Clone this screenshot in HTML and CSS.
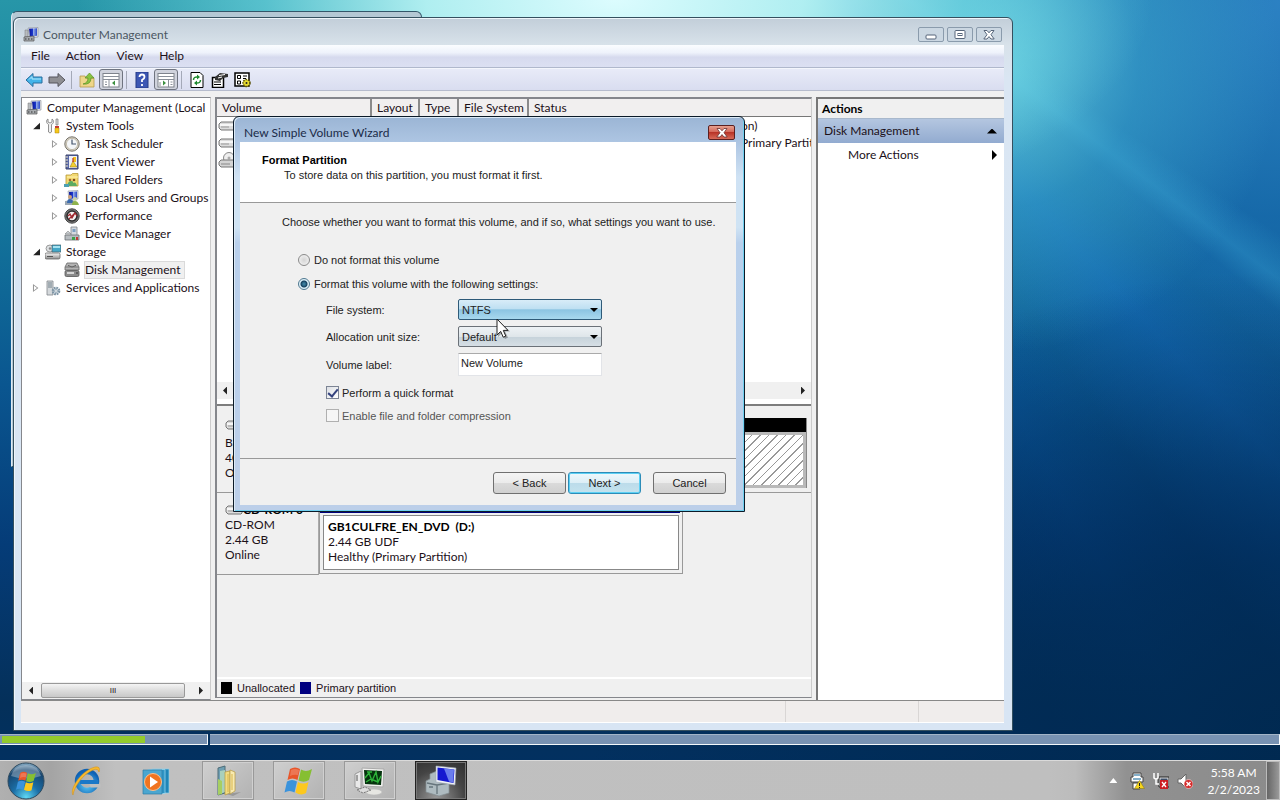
FILE: index.html
```html
<!DOCTYPE html>
<html lang="en">
<head>
<meta charset="utf-8">
<title>Computer Management</title>
<link rel="stylesheet" href="styles.css">
</head>
<body>
<svg class="defs" aria-hidden="true">
  <defs>
    <linearGradient id="g-screen" x1="0" y1="0" x2="1" y2="0"><stop offset="0" stop-color="#0a1496"/><stop offset=".5" stop-color="#1c3ad0"/><stop offset=".55" stop-color="#8fa8e8"/><stop offset="1" stop-color="#2a48c8"/></linearGradient>
    <radialGradient id="g-orb" cx=".5" cy=".95" r=".95"><stop offset="0" stop-color="#5fd8f4"/><stop offset=".4" stop-color="#1b6ea6"/><stop offset=".8" stop-color="#17456f"/><stop offset="1" stop-color="#8fb4cc"/></radialGradient>
    <radialGradient id="g-ie" cx=".5" cy=".7" r=".7"><stop offset="0" stop-color="#5fd0fa"/><stop offset="1" stop-color="#0f62b4"/></radialGradient>
    <linearGradient id="g-disk" x1="0" y1="0" x2="0" y2="1"><stop offset="0" stop-color="#fafafa"/><stop offset="1" stop-color="#8c8c8c"/></linearGradient>
    <symbol id="i-computer" viewBox="0 0 16 16"><path d="M5 1l10-.5V10l-8 1z" fill="#e4e6ea" stroke="#888c96" stroke-width=".6"/><path d="M6 1.800l8-.5v7.500l-7 1z" fill="url(#g-screen)"/><path d="M2 3h3v7H2z" fill="#b8bcc0" stroke="#777" stroke-width=".5"/><path d="M1 10l10-1v5H1z" fill="#a8acb0" stroke="#555" stroke-width=".7"/><path d="M2 12h1.500M5 12h1.500M8 12h1.500" stroke="#333"/></symbol>
    <symbol id="i-tools" viewBox="0 0 16 16"><path d="M3 1v3l2 1 2-1V1c3 2 1 5-.5 5.500V14q-1.500 2-3 0V6.500C1 5 1 2 3 1z" fill="#f0f0f0" stroke="#777" stroke-width=".8"/><path d="M11 1h2v6h-2z" fill="#ddd" stroke="#666" stroke-width=".6"/><path d="M10 8h4v2h-4z" fill="#c33"/><path d="M10 10h4v5h-4z" fill="#f5c71a" stroke="#a98210" stroke-width=".5"/></symbol>
    <symbol id="i-clock" viewBox="0 0 16 16"><circle cx="8" cy="8" r="7.200" fill="#d8d4c8" stroke="#77736a"/><circle cx="8" cy="8" r="5.600" fill="#f4f6f8" stroke="#b4ac98" stroke-width=".7"/><path d="M8 3.500V8h4" fill="none" stroke="#44546c" stroke-width="1.200"/></symbol>
    <symbol id="i-event" viewBox="0 0 16 16"><path d="M2 1h12v14H2z" fill="#5868a8" stroke="#39406a"/><path d="M5 2h8v12H5z" fill="#eef0f8"/><path d="M1 3h3M1 6h3M1 9h3M1 12h3" stroke="#bbb" stroke-width="1.300"/><path d="M9 3h3v5H9z" fill="#f0c020"/><path d="M6 13l3-6 4 6z" fill="#f4d030" stroke="#8a7010" stroke-width=".5"/><path d="M9 4v4" stroke="#c03020" stroke-width="1.200"/></symbol>
    <symbol id="i-folder" viewBox="0 0 16 16"><path d="M2 3h5l1.500-1.500H14V14H2z" fill="#f2d871" stroke="#b99a36" stroke-width=".8"/><path d="M3 5h11" stroke="#fff3b0"/><circle cx="6" cy="8" r="1.300" fill="#a5662e"/><circle cx="10" cy="8" r="1.300" fill="#7e4a1e"/><path d="M3 14q1-5 4-5t2 2q3-2 4 3z" fill="#5cab62"/><path d="M0 12h5v3H0z" fill="#4c9fb0"/></symbol>
    <symbol id="i-users" viewBox="0 0 16 16"><path d="M4 1l10-.5V9L5 10z" fill="#dde2ea" stroke="#8a90a0" stroke-width=".6"/><path d="M5 2l8-.5v6.500l-7.500 1z" fill="url(#g-screen)"/><path d="M1 11l8-1 3 3v2H1z" fill="#9aa6b2"/><circle cx="6" cy="7" r="2" fill="#caa27c"/><path d="M3 13q0-4 3-4t3 4z" fill="#3c6cae"/><circle cx="11" cy="9" r="2" fill="#c9d3a6"/><path d="M8 15q0-4 3-4t4 4z" fill="#8fb34c"/></symbol>
    <symbol id="i-perf" viewBox="0 0 16 16"><circle cx="8" cy="8" r="7.200" fill="#777" stroke="#444"/><circle cx="8" cy="8" r="5" fill="#f4f2f2" stroke="#2c2c2c" stroke-width="1.600"/><path d="M4 8l2-2 2 4 3-5 2 3M5 11l6-6" fill="none" stroke="#a12a30" stroke-width="1.300"/></symbol>
    <symbol id="i-device" viewBox="0 0 16 16"><path d="M7 1h6v9H7z" fill="#d5dae0" stroke="#80868c" stroke-width=".8"/><path d="M8.500 3h3v3h-3z" fill="#7d9fc0"/><path d="M1 9h14v5H1z" fill="#b7bcc0" stroke="#6b7074" stroke-width=".8"/><path d="M1 8l3-3 3 3z" fill="#c9ced2" stroke="#777" stroke-width=".5"/><path d="M8 11h3v3H8z" fill="#3da04a"/><path d="M12 11h2v3h-2z" fill="#c03a34"/></symbol>
    <symbol id="i-storage" viewBox="0 0 16 16"><rect x="0" y="9" width="15" height="6" rx="1.500" fill="url(#g-disk)" stroke="#666" stroke-width=".8"/><ellipse cx="5" cy="4.500" rx="4" ry="3.500" fill="#dde0e2" stroke="#888" stroke-width=".8"/><circle cx="5" cy="4.500" r="1.200" fill="#888"/><path d="M7 1h9v7H7z" fill="#44a8c8" stroke="#45606c" stroke-width=".7"/><path d="M8 2h7v2H8z" fill="#a6e2f0"/><path d="M2 12.500h6" stroke="#555"/></symbol>
    <symbol id="i-disk" viewBox="0 0 16 16"><path d="M3 1h10l2 4v3H1V5z" fill="#b4b4b4" stroke="#666" stroke-width=".8"/><path d="M4 3.500q4 3 8 0" fill="none" stroke="#555"/><rect x="1" y="8.500" width="14" height="6" rx="1.500" fill="#8a8a8a" stroke="#555" stroke-width=".8"/><path d="M3 11h7" stroke="#eee" stroke-width="1.500"/><path d="M12 11h2" stroke="#333"/><path d="M1 5h14" stroke="#777"/></symbol>
    <symbol id="i-services" viewBox="0 0 16 16"><path d="M2 1h6v14H2z" fill="#d5d9dc" stroke="#81878c" stroke-width=".8"/><path d="M3 3h4M3 5h4M3 7h4" stroke="#70808a"/><circle cx="11" cy="11" r="3.200" fill="#dfe8ee" stroke="#7d94a5" stroke-width="2.200" stroke-dasharray="1.700 .8"/><circle cx="11" cy="11" r="1.400" fill="#fff" stroke="#7d94a5" stroke-width=".8"/></symbol>
    <symbol id="i-drive" viewBox="0 0 18 10"><path d="M3 1h13l1 2v5l-1 1H3L1 7V3z" fill="#dcdcdc" stroke="#777"/><path d="M2 4h14" stroke="#fff" stroke-width="1.500"/><path d="M3 6h8" stroke="#999"/></symbol>
    <symbol id="i-cd" viewBox="0 0 18 16"><circle cx="11" cy="6" r="5.500" fill="#eee" stroke="#888"/><circle cx="11" cy="6" r="1.500" fill="#aaa"/><path d="M3 8h13l1 2v4l-1 1H3l-2-2v-3z" fill="#d4d4d4" stroke="#777"/><path d="M3 12h9" stroke="#888"/></symbol>
    <symbol id="i-flag" viewBox="0 0 32 32"><path d="M7 4q5-3 10 0l-2.500 11q-5-3-10 0z" fill="#e8562a"/><path d="M18 4.500q5 3 11-.5l-3 11q-5 3-10.500.5z" fill="#86bf32"/><path d="M4 16.500q5-3 10 0l-2.500 11q-5-3-10 0z" fill="#3a93dc"/><path d="M15 17q5 3 10.500 0l-2.500 11q-5 3-10.500-.500z" fill="#fcc81e"/><path d="M8 5q4-2 8 0l-1 5q-4-1-8 1z" fill="#fff" opacity=".2"/></symbol>
  </defs>
</svg>

<main class="desktop">
  <div class="back-window"></div>

  <section class="window" aria-label="Computer Management">
    <header class="titlebar">
      <svg class="ico"><use href="#i-computer"/></svg>
      <h1>Computer Management</h1>
      <div class="caption">
        <button aria-label="Minimize"><svg viewBox="0 0 16 12"><rect x="3" y="6" width="10" height="4" rx="1" fill="#fff" stroke="#56657a"/></svg></button>
        <button aria-label="Maximize"><svg viewBox="0 0 16 12"><rect x="3" y="1.500" width="10" height="8" rx="1" fill="#fff" stroke="#56657a"/><rect x="6" y="4.500" width="4" height="2" fill="#fff" stroke="#56657a"/></svg></button>
        <button aria-label="Close"><svg viewBox="0 0 16 12"><path d="M3 1.500h3l2 2.300 2-2.300h3L10 5.700l3.200 4.300H10L8 7.600 6 10H2.800L6 5.700z" fill="#fff" stroke="#56657a"/></svg></button>
      </div>
    </header>
    <nav class="menubar"><button>File</button><button>Action</button><button>View</button><button>Help</button></nav>
    <div class="toolbar">
      <button aria-label="Back"><svg viewBox="0 0 18 16"><path d="M1 8l7-6.500V5h9v6H8v3.500z" fill="#43b4ea" stroke="#2a6c9c"/><path d="M4 7.500l3-3V7h9" fill="none" stroke="#b5e7fb"/></svg></button>
      <button aria-label="Forward"><svg viewBox="0 0 18 16"><path d="M17 8l-7-6.500V5H1v6h9v3.500z" fill="#8f8f94" stroke="#55555c"/></svg></button>
      <i class="sep"></i>
      <button aria-label="Up"><svg viewBox="0 0 18 16"><path d="M2 4h5l1 2h8v9H2z" fill="#eed68a" stroke="#b59a4c" stroke-width=".8"/><path d="M5 12q5-1 5-6H7l4.500-5L16 6h-3q0 7-8 6z" fill="#88c442" stroke="#5b8f25" stroke-width=".7"/></svg></button>
      <button class="on" aria-label="Show tree"><svg viewBox="0 0 18 16"><rect x="1" y="1.500" width="16" height="13.500" fill="#fff" stroke="#7e838c"/><path d="M1 4.500h16M1 7.500h16M7 8v7" stroke="#8a909a"/><path d="M3 10h2M3 12.500h2" stroke="#8a909a"/><path d="M13 8.500v5L10 11z" fill="#3d9140"/></svg></button>
      <i class="sep"></i>
      <button aria-label="Help"><svg viewBox="0 0 18 16"><rect x="3" y="0" width="12" height="16" fill="#3c56b4" stroke="#243a86"/><path d="M6.500 5q0-2.500 2.500-2.500T11.500 5Q11.500 6.500 9 8v2M9 12v2" fill="none" stroke="#fff" stroke-width="1.800"/></svg></button>
      <button class="on" aria-label="Show actions"><svg viewBox="0 0 18 16"><rect x="1" y="1.500" width="16" height="13.500" fill="#fff" stroke="#7e838c"/><path d="M1 4.500h16M1 7.500h16M11.500 8v7" stroke="#8a909a"/><path d="M13.500 10h2M13.500 12.500h2M3 10v4" stroke="#8a909a"/><path d="M6 8.500v5L9 11z" fill="#3d9140"/></svg></button>
      <i class="sep"></i>
      <button aria-label="Refresh"><svg viewBox="0 0 18 16"><path d="M3 .5h9l3 3v12H3z" fill="#fff" stroke="#000"/><path d="M5.500 8q0-3.500 4.500-3M12.500 8q0 3.500-4.500 3" fill="none" stroke="#1f8a30" stroke-width="1.500"/><path d="M9 2.500L12 5 9 7.500zM9 8.500L6 11l3 2.500z" fill="#1f8a30"/></svg></button>
      <button aria-label="Properties"><svg viewBox="0 0 18 16"><path d="M1.500 5.500h11v10h-11z" fill="#fff" stroke="#000" stroke-width="1.500"/><path d="M3 10h7M3 12.500h7" stroke="#000" stroke-width="1.200"/><path d="M4 5l5-4 8 1v3l-5 1-3 3-5-1z" fill="#333"/><path d="M8 3.500l6-1M7 6l4-1" stroke="#fff"/></svg></button>
      <button aria-label="Settings"><svg viewBox="0 0 18 16"><rect x="1" y="1" width="14" height="13" fill="#fff" stroke="#000" stroke-width="1.500"/><path d="M3.500 3.500h3v3h-3zM9 4h4M9 6.500h3M3.500 9h3v3h-3z" fill="none" stroke="#000"/><circle cx="12.500" cy="11" r="3.500" fill="#e8dc32" stroke="#554c00" stroke-width="1.500" stroke-dasharray="1.500 1"/><circle cx="12.500" cy="11" r="1" fill="#222"/></svg></button>
    </div>

    <div class="panes">
      <nav class="tree">
        <ul>
          <li><svg class="ico"><use href="#i-computer"/></svg><span>Computer Management (Local</span></li>
          <li class="l1 open"><svg class="ico"><use href="#i-tools"/></svg><span>System Tools</span></li>
          <li class="l2 shut"><svg class="ico"><use href="#i-clock"/></svg><span>Task Scheduler</span></li>
          <li class="l2 shut"><svg class="ico"><use href="#i-event"/></svg><span>Event Viewer</span></li>
          <li class="l2 shut"><svg class="ico"><use href="#i-folder"/></svg><span>Shared Folders</span></li>
          <li class="l2 shut"><svg class="ico"><use href="#i-users"/></svg><span>Local Users and Groups</span></li>
          <li class="l2 shut"><svg class="ico"><use href="#i-perf"/></svg><span>Performance</span></li>
          <li class="l2"><svg class="ico"><use href="#i-device"/></svg><span>Device Manager</span></li>
          <li class="l1 open"><svg class="ico"><use href="#i-storage"/></svg><span>Storage</span></li>
          <li class="l2"><svg class="ico"><use href="#i-disk"/></svg><span class="picked">Disk Management</span></li>
          <li class="l1 shut"><svg class="ico"><use href="#i-services"/></svg><span>Services and Applications</span></li>
        </ul>
        <div class="scroll"><i class="al"></i><b>III</b><i class="ar"></i></div>
      </nav>

      <section class="center">
        <div class="volumes">
          <table>
            <colgroup><col class="c1"><col class="c2"><col class="c3"><col class="c4"><col></colgroup>
            <thead><tr><th>Volume</th><th>Layout</th><th>Type</th><th>File System</th><th>Status</th></tr></thead>
            <tbody>
              <tr><td><svg class="drv"><use href="#i-drive"/></svg></td><td></td><td></td><td></td><td class="frag">on)</td></tr>
              <tr><td><svg class="drv"><use href="#i-drive"/></svg></td><td></td><td></td><td></td><td class="frag">Primary Partit</td></tr>
              <tr><td><svg class="cd"><use href="#i-cd"/></svg></td><td></td><td></td><td></td><td></td></tr>
            </tbody>
          </table>
          <div class="scroll"><i class="al"></i><i class="ar"></i></div>
        </div>
        <div class="disks">
          <div class="disk">
            <div class="info"><svg class="drv"><use href="#i-drive"/></svg><p>Basic</p><p>40.00 GB</p><p>Online</p></div>
            <div class="part free"><div class="bar"></div><div class="hatch"></div></div>
          </div>
          <div class="disk cdrom">
            <div class="info"><h2><svg class="drv"><use href="#i-drive"/></svg>CD-ROM 0</h2><p>CD-ROM</p><p>2.44 GB</p><p>Online</p></div>
            <div class="part used"><div class="bar"></div><div class="box"><h2>GB1CULFRE_EN_DVD&nbsp; (D:)</h2><p>2.44 GB UDF</p><p>Healthy (Primary Partition)</p></div></div>
          </div>
        </div>
        <div class="legend"><i class="black"></i><span>Unallocated</span><i class="navy"></i><span>Primary partition</span></div>
      </section>

      <aside class="actions">
        <h2>Actions</h2>
        <button class="group">Disk Management<i class="up"></i></button>
        <button class="more">More Actions<i class="right"></i></button>
      </aside>
    </div>
    <footer class="status"><span></span><span></span><span></span></footer>
  </section>

  <form class="dialog" aria-label="New Simple Volume Wizard">
    <header class="dlg-title"><h1>New Simple Volume Wizard</h1>
      <button type="button" aria-label="Close"><svg viewBox="0 0 16 12"><path d="M3 1.500h3l2 2.300 2-2.300h3L10 5.700l3.200 4.300H10L8 7.600 6 10H2.800L6 5.700z" fill="#fff" stroke="#6a3030" stroke-width=".8"/></svg></button>
    </header>
    <div class="dlg-page">
      <div class="intro"><h2>Format Partition</h2><p>To store data on this partition, you must format it first.</p></div>
      <div class="fields">
        <p>Choose whether you want to format this volume, and if so, what settings you want to use.</p>
        <label class="opt"><input type="radio" name="mode">Do not format this volume</label>
        <label class="opt"><input type="radio" name="mode" checked>Format this volume with the following settings:</label>
        <div class="grid">
          <label for="fs">File system:</label><div class="drop hot"><select id="fs"><option>NTFS</option></select></div>
          <label for="au">Allocation unit size:</label><div class="drop"><select id="au"><option>Default</option></select></div>
          <label for="vl">Volume label:</label><input id="vl" type="text" value="New Volume">
        </div>
        <label class="opt check"><input type="checkbox" checked>Perform a quick format</label>
        <label class="opt check off"><input type="checkbox" disabled>Enable file and folder compression</label>
      </div>
      <footer class="buttons"><button type="button">&lt; Back</button><button type="button" class="default">Next &gt;</button><button type="button" class="cancel">Cancel</button></footer>
    </div>
  </form>

  <svg class="cursor" viewBox="0 0 14 22"><path d="M2 2v17l4-4 3 6 3-1.500-3-6h5z" fill="#000" opacity=".3"/><path d="M1 1v16l3.700-3.600 2.500 5.800 2.600-1.100-2.500-5.700H12z" fill="#fff" stroke="#222"/></svg>
</main>

<div class="setup"><div class="track first"><div class="fill"></div></div><div class="track"></div></div>

<footer class="taskbar">
  <button class="start" aria-label="Start"><svg viewBox="0 0 38 38"><circle cx="19" cy="19" r="18" fill="url(#g-orb)" stroke="#2f4a5e"/><path d="M4 14q3-11 15-11t15 11q-15 5-30 0z" fill="#fff" opacity=".3"/><use href="#i-flag" x="8" y="8" width="23" height="23"/></svg></button>
  <button class="pin" aria-label="Internet Explorer"><svg viewBox="0 0 32 32"><circle cx="17" cy="16" r="9.500" fill="none" stroke="url(#g-ie)" stroke-width="5.500"/><path d="M10 17h18" stroke="#1a78c8" stroke-width="4"/><path d="M19.500 19h11v3.500h-10z" fill="#bfbfbf"/><path d="M3 30C-1 24 12 5 25 2q6-1 4 5-1-4-6-2C13 9 4 22 3 30z" fill="#f6b92e" stroke="#d08d14" stroke-width=".5"/></svg></button>
  <button class="pin" aria-label="Media Player"><svg viewBox="0 0 32 32"><path d="M12 4h17v24H12z" fill="#1f86b8" stroke="#8fd0ea" stroke-width=".7"/><path d="M8 4.500h17v24H8z" fill="#2f96c6" stroke="#a8def2" stroke-width=".7"/><path d="M3 5h19v24H3z" fill="#4aa6d0" stroke="#2b7ca6" stroke-width=".7"/><circle cx="13" cy="17" r="8.500" fill="#f07420" stroke="#fbc08c"/><path d="M10 11.500v11l8-5.500z" fill="#fff"/></svg></button>
  <button class="task" aria-label="Explorer"><svg viewBox="0 0 32 32"><path d="M14 29l15-2-8 4z" fill="#777" opacity=".5"/><path d="M6 3l7-2v27l-7 2z" fill="#6f9fb2" stroke="#4e6c78"/><path d="M8 6l5-1v22l-5 2z" fill="#a9d0bd"/><path d="M13 7l5-1v22l-5 2z" fill="#f2dc82" stroke="#b69a40" stroke-width=".7"/><path d="M18 5l5 2v19l-5 3z" fill="#f8eab0" stroke="#b69a40" stroke-width=".7"/><path d="M6 14l4 2v13l-4 1z" fill="#a6cf62"/><path d="M16 9v18M20 9v16" stroke="#d8b64c"/></svg></button>
  <button class="task" aria-label="Windows Setup"><svg viewBox="0 0 32 32"><use href="#i-flag" width="32" height="32"/></svg></button>
  <button class="task" aria-label="Monitor"><svg viewBox="0 0 32 32"><path d="M1 9l6-3v18l-6-2z" fill="#e9e9e9" stroke="#999"/><path d="M3 10v6" stroke="#555"/><path d="M8 3l22 1-1 18-20-1z" fill="#f0f0ee" stroke="#aaa"/><path d="M10 5l18 1-1 14-16-1z" fill="#06330e"/><path d="M11 13l4-5 3 8 4-9 2 10 3-6M12 17l5-3 7 3M13 7h5" fill="none" stroke="#2eb43a" stroke-width="1.400"/><ellipse cx="20" cy="27" rx="8" ry="3" fill="#e6e6e2" stroke="#bbb" stroke-width=".6"/><path d="M3 25l8-3 6 3-8 3z" fill="#ddd" stroke="#777" stroke-dasharray="2 1"/></svg></button>
  <button class="task active" aria-label="Computer Management"><svg viewBox="0 0 32 32"><path d="M1 16l4-2V9l7-3 5 8 7 3v11l-10 3-13-4z" fill="#aebbc0" stroke="#848f94" stroke-width=".7"/><path d="M2 18l10 2 12-2M4 22h4M12 20v9" fill="none" stroke="#66757c" stroke-width="1.300"/><path d="M11 1l20 2-1 17-19-3z" fill="#eff2f6" stroke="#9ca4b0" stroke-width=".6"/><path d="M12.500 2.500l17 2-1 13.500-16-3z" fill="#1518d0"/><path d="M19 3.500l10 1-1 13-4-1z" fill="#7f97f4" opacity=".8"/></svg></button>
  <div class="tray">
    <i class="chev"></i>
    <svg viewBox="0 0 16 18"><path d="M4 1h8v4h2v5H2V5h2zM4 11h7v6H4z" fill="#fff" stroke="#444"/><path d="M5 3h6M4 7h8" stroke="#5c95b8" stroke-width="1.500"/><path d="M10.500 8.500l5 8h-10z" fill="#f7d61c" stroke="#8f7c14" stroke-width=".6"/><path d="M10.500 11v3M10.500 15v1" stroke="#222"/></svg>
    <svg viewBox="0 0 16 18"><path d="M6 5h10v10H6z" fill="#e6e6e6" stroke="#222"/><path d="M7.500 6.500h7V13h-7z" fill="#3b4d68"/><path d="M1 1v5q2 2 4 0V1M3 7v5h3" fill="none" stroke="#fff" stroke-width="1.500"/><path d="M7 8h8v9H7z" fill="#cc1f24"/><path d="M9 10l4 5M13 10l-4 5" stroke="#fff" stroke-width="1.300"/></svg>
    <svg viewBox="0 0 16 18"><path d="M1 7h3l5-5v14l-5-5H1z" fill="#fff" stroke="#666"/><circle cx="11.500" cy="12" r="4.500" fill="#d42a2a" stroke="#fff" stroke-width=".5"/><path d="M9.500 10l4 4M13.500 10l-4 4" stroke="#fff" stroke-width="1.500"/></svg>
    <time><span>5:58 AM</span><span>2/2/2023</span></time>
    <button class="peek" aria-label="Show desktop"></button>
  </div>
</footer>
</body>
</html>
```
FILE: styles.css
```css
* { box-sizing: border-box; }
body {
  margin: 0;
  height: 100vh;
  overflow: hidden;
  display: flex;
  flex-direction: column;
  font: 12px/18px Lato, "Open Sans", sans-serif;
  color: #1c1018;
  background:
    radial-gradient(ellipse 42% 30% at 48% 0, #dcfcfe, rgba(190, 248, 248, .9) 35%, rgba(120, 222, 230, .6) 65%, transparent),
    radial-gradient(ellipse 54% 66% at 100% 100%, rgba(0, 40, 78, .95), rgba(0, 42, 84, .75) 45%, transparent),
    radial-gradient(ellipse 22% 36% at 78% 8%, rgba(104, 208, 226, .9), rgba(64, 172, 210, .5) 50%, transparent),
    conic-gradient(from 0deg at 700px -157px, transparent 124deg, rgba(60, 170, 220, .3) 127deg, rgba(30, 120, 190, .08) 129deg, transparent 132deg, rgba(20, 110, 200, .35) 137deg, transparent 145deg, rgba(10, 90, 180, .2) 151deg, transparent 158deg),
    radial-gradient(ellipse 36% 60% at 100% 0, rgba(44, 128, 196, .95), rgba(24, 100, 175, .7) 45%, transparent),
    linear-gradient(#2796a8, #14789c 25%, #0a5690 48%, #053c78 68%, #04305a 88%, #003064);
}
h1, h2, p, ul { margin: 0; padding: 0; font: inherit; }
button, input, select { font: inherit; color: inherit; margin: 0; padding: 0; }
button { border: 0; background: none; }
.defs { position: absolute; width: 0; height: 0; }
.ico { width: 16px; height: 16px; flex: none; }

.desktop { flex: 1; position: relative; min-height: 0; }
.back-window {
  position: absolute; left: 11px; top: 11px; width: 411px; height: 456px;
  border: 1px solid #33576a; border-left-color: #dfeaf2; border-radius: 6px 6px 0 0;
  background: #b4c8d4;
}
.window {
  position: absolute; left: 13px; top: 17px; right: 267px; bottom: 3px;
  display: flex; flex-direction: column;
  padding: 0 8px 7px 7px;
  border: 1px solid #35505f; border-radius: 6px 6px 0 0;
  background: linear-gradient(#c2ced9, #d8e2ea 27px, #dae6f3 60px, #d8e5f4);
  box-shadow: inset 1px 1px 0 #eef5fa;
}
.titlebar { height: 27px; display: flex; align-items: center; gap: 4px; padding: 6px 2px 0; color: #4b5763; flex: none; }
.titlebar h1 { flex: 1; }
.caption { display: flex; gap: 3px; }
.caption button { width: 26px; height: 15px; border: 1px solid #8a9bac; border-radius: 2px; background: #cbd7e2; display: grid; place-items: center; }
.caption svg { width: 16px; height: 12px; }
.menubar {
  height: 23px; flex: none; display: flex; gap: 16px; padding: 0 10px;
  background: linear-gradient(#fbfdff, #eef2fb 35%, #d6daee 55%, #dce0f2);
  border-bottom: 1px solid #b0b8cc;
}
.toolbar {
  height: 23px; flex: none; display: flex; align-items: center; gap: 1px; padding: 0 2px;
  background: linear-gradient(#e8ebf8, #d9ddf0); border-bottom: 1px solid #b6bccd; border-top: 1px solid #f4f6fc;
}
.toolbar button { width: 22px; height: 21px; display: grid; place-items: center; }
.toolbar svg { width: 18px; height: 16px; }
.toolbar .on { border: 1px solid #6f7480; border-radius: 3px; background: #d0d3dd; width: 24px; }
.sep { width: 1px; height: 18px; background: #a4a9b8; margin: 0 3px 0 2px; }

.panes { flex: 1; min-height: 0; display: grid; grid-template-columns: 190px 1fr 188px; gap: 4px; padding-top: 6px; background: #f0f0f0; }
.tree, .center, .actions { min-width: 0; min-height: 0; border: 1px solid #85878c; border-right-color: #ccc; display: flex; flex-direction: column; }
.tree { background: #fff; overflow: hidden; }
.tree ul { flex: 1; list-style: none; padding-top: 1px; }
.tree li { height: 18px; display: flex; align-items: center; gap: 5px; padding-left: 4px; white-space: nowrap; }
.tree .l1 { padding-left: 10px; }
.tree .l2 { padding-left: 29px; }
.tree .l1::before, .tree .l2::before { content: ""; width: 8px; height: 8px; flex: none; }
.tree .open::before { background: #222; clip-path: polygon(100% 10%, 100% 90%, 15% 90%); }
.tree .shut::before {
  background: #999; clip-path: polygon(evenodd, 12% 0, 12% 100%, 80% 50%, 12% 0, 25% 22%, 25% 78%, 62% 50%, 25% 22%);
}
.picked { background: #f0f0f0; outline: 1px solid #dadada; padding-right: 4px; height: 16px; line-height: 16px; }
.scroll { height: 17px; flex: none; display: flex; align-items: center; justify-content: space-between; background: #f0f0f0; padding: 0 7px; }
.scroll b { width: 144px; height: 15px; border: 1px solid #999; border-radius: 2px; background: linear-gradient(#f4f4f4, #dcdcdc 50%, #c8c8c8); font: 8px/13px "Liberation Sans", sans-serif; text-align: center; }
.tree .scroll b { margin-right: 6px; }
.al, .ar { width: 4px; height: 8px; background: #222; flex: none; }
.al { clip-path: polygon(100% 0, 100% 100%, 0 50%); }
.ar { clip-path: polygon(0 0, 0 100%, 100% 50%); }

.center { background: #f0f0f0; border-width: 2px 1px 1px 2px; margin-bottom: 2px; }
.volumes { flex: none; height: 307px; background: #fff; display: flex; flex-direction: column; border-bottom: 2px solid #7d7d7d; padding-bottom: 5px; overflow: hidden; }
table { flex: none; width: 100%; table-layout: fixed; border-collapse: separate; border-spacing: 0; }
.c1 { width: 155px; } .c2 { width: 48px; } .c3 { width: 39px; } .c4 { width: 70px; }
th { height: 18px; padding: 0 0 0 5px; font-weight: normal; text-align: left; line-height: 17px; background: #f1efef; border-right: 2px solid #8a8a8a; border-bottom: 1px solid #777; white-space: nowrap; }
th:last-child { border-right: 0; }
td { height: 17px; padding: 0 0 0 1px; line-height: 17px; white-space: nowrap; vertical-align: middle; }
td.frag { padding-left: 212px; }
.drv { width: 18px; height: 10px; display: block; }
.cd { width: 18px; height: 16px; display: block; }
.volumes .scroll { margin-top: auto; padding: 0 6px; }
.disks { flex: 1; min-height: 0; line-height: 15px; }
.disk { display: flex; height: 87px; border-bottom: 1px solid #999; }
.info { width: 102px; padding: 14px 8px 0; border-right: 1px solid #aaa; }
.info .drv { margin-bottom: 5px; }
.info h2, .box h2 { font-weight: bold; color: #000; }
.free { flex: 1; margin: 12px 4px 4px 1px; display: flex; flex-direction: column; border-right: 1px solid #888; }
.free .bar { height: 14px; background: #000; }
.hatch { flex: 1; border: 3px solid #b9b9b9; border-left: 0; background: repeating-linear-gradient(135deg, #fff 0 5px, #999 5px 6px); }
.cdrom { width: 466px; height: 82px; border-bottom: 0; }
.cdrom .info { padding-top: 9px; border-bottom: 1px solid #999; }
.info h2 { display: flex; align-items: center; }
.cdrom .drv { margin: 0; }
.used { flex: 1; margin: 4px 0 1px; border: 1px solid #999; border-top: 0; display: flex; flex-direction: column; }
.used .bar { height: 16px; background: #00007c; margin: 0 2px 1px 0; }
.box { flex: 1; margin: 1px 3px 3px; padding: 3px 4px; background: #fff; border: 1px solid #888; }
.legend { height: 20px; flex: none; display: flex; align-items: center; border-top: 2px solid #fff; padding: 0 4px; font: 11px/16px "Liberation Sans", sans-serif; }
.legend i { width: 11px; height: 12px; margin-right: 5px; }
.legend span { margin-right: 5px; }
.black { background: #000; } .navy { background: #000080; }

.actions { background: #fff; border-width: 2px 0 0 2px; border-color: #777; }
.actions h2 { height: 20px; padding-left: 4px; line-height: 20px; font-weight: bold; color: #000; background: #f0f0f0; border-bottom: 1px solid #a8b8cc; }
.actions button { display: flex; justify-content: space-between; align-items: center; text-align: left; padding: 0 7px 0 6px; height: 24px; }
.actions .group { background: linear-gradient(#b4c6e0, #92abd0); }
.actions .more { padding-left: 30px; }
.up { width: 10px; height: 5px; background: #000; clip-path: polygon(50% 0, 100% 100%, 0 100%); }
.right { width: 5px; height: 10px; background: #000; clip-path: polygon(0 0, 100% 50%, 0 100%); }
.status { height: 23px; flex: none; display: flex; border-top: 1px solid #888; border-bottom: 1px solid #fff; background: #f0edec; }
.status span { width: 86px; border-left: 1px solid #d9d6d5; }
.status span:first-child { flex: 1; border: 0; }
.status span:nth-child(2) { width: 133px; }

.dialog {
  position: absolute; left: 233px; top: 116px; width: 40vw;
  padding: 0 8px 6px 6px; border: 1px solid #0b1a28; border-radius: 6px 6px 0 0;
  background: linear-gradient(#9bb5d5, #adc5e2 25px, #cfe2f4 60px, #cfe3f4 28%, #b9d0ec 32%, #bccfe9);
  box-shadow: inset 1px 1px 0 #dceaf6, inset -1px -1px 0 #6fd0f0;
  font: 11px/14px "Liberation Sans", sans-serif; color: #222;
}
.dlg-title { height: 25px; display: flex; justify-content: space-between; align-items: center; padding: 6px 1px 0 4px; font: 12px/18px Lato, "Open Sans", sans-serif; color: #1b2b48; }
.dlg-title button { width: 27px; height: 15px; border: 1px solid #5c2020; border-radius: 2px; background: linear-gradient(#e6a090, #d4685a 45%, #b83428 50%, #d86a58); display: grid; place-items: center; }
.dlg-title svg { width: 16px; height: 12px; }
.dlg-page { background: #f0f0f0; }
.intro { height: 61px; background: #fff; border-bottom: 1px solid #999; padding: 11px 22px; }
.intro h2 { line-height: 15px; font-weight: bold; color: #000; }
.intro p { padding-left: 22px; }
.fields { height: 255px; padding: 12px 20px 0 42px; }
.opt { display: flex; align-items: center; gap: 4px; height: 24px; margin-left: 16px; }
.fields p { margin-bottom: 19px; white-space: nowrap; }
.opt input { appearance: none; width: 12px; height: 12px; border: 1px solid #8a8a8a; border-radius: 50%; background: radial-gradient(#d4d4d4, #f8f8f8); flex: none; }
.opt input[type="radio"]:checked { border-color: #4e7890; background: radial-gradient(circle, #3a7c9c 0 1px, #15405e 3px, #d8eef8 4px, #fff); }
.grid { display: grid; grid-template-columns: 132px 144px; row-gap: 6px; margin: 3px 0 5px 44px; align-items: center; }
.drop { position: relative; }
.drop::after { content: ""; position: absolute; right: 4px; top: 9px; width: 8px; height: 4px; background: #000; clip-path: polygon(0 0, 100% 0, 50% 100%); }
.drop select { appearance: none; display: block; width: 100%; height: 21px; padding: 0 3px; border: 1px solid #6b7178; border-radius: 2px; background: linear-gradient(#eef2f5, #dfe6ea 50%, #c6d2da 52%, #d6dfe5); }
.drop.hot select { border-color: #2e5a78; background: linear-gradient(#d8ecf8, #bfe0f2 45%, #8cc4e2 52%, #a8d8ee); }
.grid input { width: 100%; height: 23px; padding: 0 2px 4px; border: 1px solid #e2e4e8; border-top-color: #aaa; background: #fff; }
.check { margin-left: 44px; gap: 3px; height: 23px; }
.check input { width: 13px; height: 13px; border-radius: 0; background: linear-gradient(135deg, #dcdfe4, #fff); border-color: #7c8494; display: grid; place-items: center; }
.check input:checked::after { content: ""; width: 4px; height: 8px; border: solid #34427e; border-width: 0 2px 2px 0; transform: rotate(40deg); margin-bottom: 2px; }
.off { color: #555; }
.check input:disabled { border-color: #b0b0b0; background: #f6f6f6; }
.buttons { border-top: 1px solid #999; padding: 13px 10px 11px; display: flex; justify-content: flex-end; gap: 2px; }
.buttons button { width: 73px; height: 22px; border: 1px solid #707070; border-radius: 3px; background: linear-gradient(#f4f4f4, #ebebeb 50%, #dadada 52%, #d0d0d0); }
.buttons .default { border-color: #2c8cb8; box-shadow: inset 0 0 0 1px #5cd0f4; background: linear-gradient(#eef8fc, #dceef6 50%, #bcdcea 52%, #c4e2ee); }
.buttons .cancel { margin-left: 10px; }
.cursor { position: absolute; left: 496px; top: 318px; width: 14px; height: 22px; }

.setup { height: 26px; flex: none; display: flex; gap: 2px; padding-bottom: 15px; }
.track { flex: 1; background: #7892b2; border: solid #f4f8fa; border-width: 0 1px 1px 0; border-top: 1px solid #a3b5c8; }
.first { flex: none; width: 208px; padding: 1px 0 1px 2px; }
.fill { width: 143px; height: 7px; background: #94cc2c; }

.taskbar {
  height: 40px; flex: none; display: flex; align-items: center; padding-left: 7px;
  border-top: 1px solid #dadada;
  background: linear-gradient(90deg, #b0b0b0, #a4a4a4 4%, #c0c0c0 9%, #bfbfbf 82%, #bcbcbc 84%, #919191 88%, #8b8b8b);
}
.taskbar > button { display: grid; place-items: center; flex: none; }
.start { width: 38px; height: 38px; margin-right: 25px; }
.start svg { width: 38px; height: 38px; }
.pin { width: 32px; margin-right: 38px; }
.pin + .task { margin-left: -8px; }
.pin svg, .task svg { width: 32px; height: 32px; }
.task { width: 52px; height: 39px; margin-right: 19px; border: 1px solid #999; box-shadow: inset 0 0 0 1px #d0d0d0; background: linear-gradient(135deg, #cfcfcf, #b2b2b2); }
.active { background: radial-gradient(circle at 40% 100%, #999, #444 60%, #2e2e2e); border-color: #222; box-shadow: inset 0 0 0 1px #777; }
.tray { margin-left: auto; display: flex; align-items: center; gap: 8px; height: 100%; color: #fff; }
.tray svg { width: 16px; height: 18px; }
.chev { width: 8px; height: 5px; background: #fff; clip-path: polygon(50% 0, 100% 100%, 0 100%); margin-right: 4px; }
time { display: flex; flex-direction: column; align-items: center; line-height: 17px; margin: 0 -2px 0 6px; }
.peek { width: 14px; height: 100%; border: 1px solid #bbb; background: linear-gradient(90deg, #666, #999); }
```
